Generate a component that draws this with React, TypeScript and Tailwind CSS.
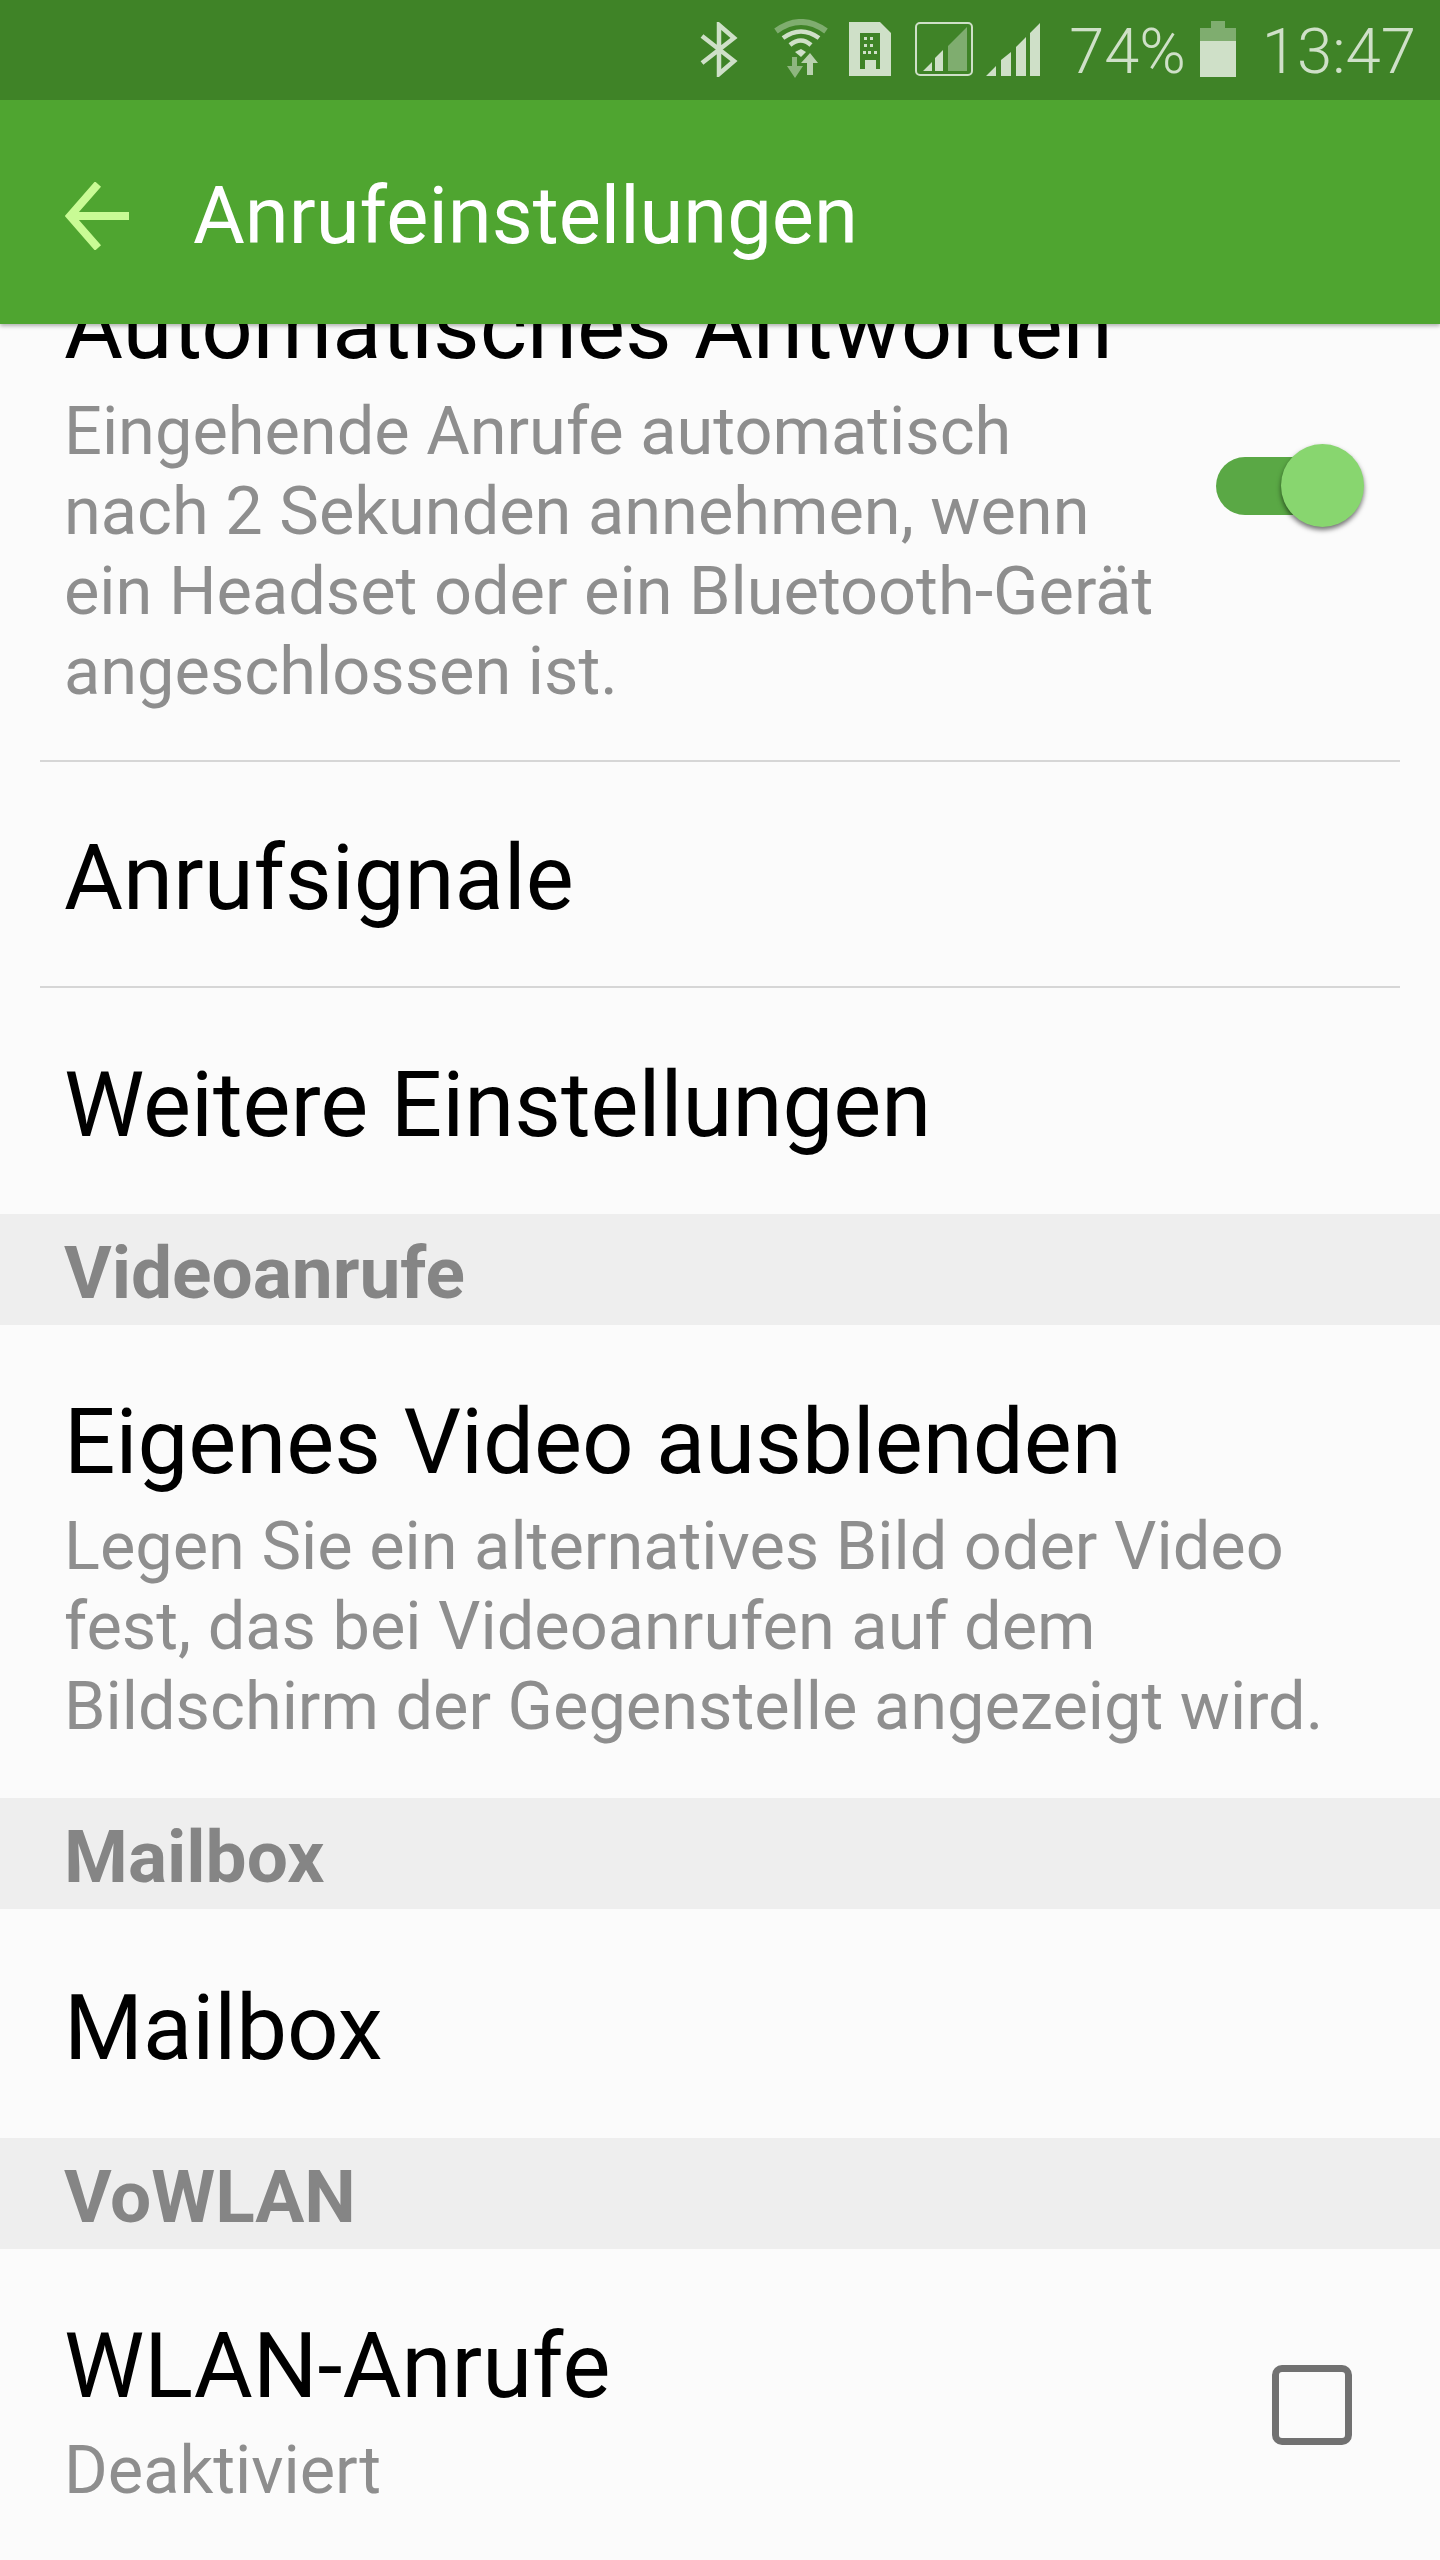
import React from "react";

const font = { fontFamily: "Roboto, sans-serif" };
const c = "#cfe0c8";
const bg = "#3f8327";

function StatusIcons() {
  return (
    <>
      <svg width="38" height="55" viewBox="0 0 38 55" className="mr-[35px]" fill="none" stroke={c} strokeWidth="4.5">
        <path d="M2 14 L34 39 L19 52 V3 L34 16 L2 41" />
      </svg>
      <svg width="56" height="60" viewBox="0 0 56 60" className="mr-[20px]" fill="none">
        <path d="M3 12 Q28 -6 53 12" stroke={c} strokeOpacity="0.45" strokeWidth="6" />
        <path d="M10 19 Q28 6 46 19" stroke={c} strokeWidth="4.5" />
        <path d="M17 26 Q28 17 38 26" stroke={c} strokeWidth="4.5" />
        <path d="M22 33 L28 30 L33 33 L28 38 Z" fill={c} />
        <path fill={c} fillOpacity="0.55" d="M19 38 H24 V47 H30 L22 59 L14 47 H19 Z" />
        <path fill={c} fillOpacity="0.85" d="M37 34 L45 44 H40 V56 H34 V44 H28 Z" />
      </svg>
      <svg width="42" height="54" viewBox="0 0 42 54" className="mr-[24px]">
        <path fill={c} d="M0 0 H31 L42 11 V54 H0 Z" />
        <path fill={bg} d="M11 11 H31 V47 H27 V38 H16 V47 H11 Z" />
        <path fill={c} d="M15 15 h3 v3 h-3z M21 15 h3 v3 h-3z M15 22 h3 v3 h-3z M21 22 h3 v3 h-3z M14 29 h3 v3 h-3z M19 29 h3 v3 h-3z M25 29 h3 v3 h-3z" />
      </svg>
      <svg width="58" height="54" viewBox="0 0 58 54" className="mr-[13px]" fill="none">
        <rect x="1" y="1" width="56" height="52" rx="4" stroke={c} strokeWidth="2" />
        <path d="M8 49 L17 40 V49 Z M20 49 V36 L28 28 V49 Z" fill={c} />
        <path d="M33 49 V24 L52 5 V49 Z" fill={c} fillOpacity="0.45" />
      </svg>
      <svg width="54" height="53" viewBox="0 0 54 53" className="mr-[29px]">
        <path fill={c} d="M0 53 L10 43 V53 Z M15 53 V37 L25 29 V53 Z M30 53 V24 L40 14 V53 Z M44 53 V10 L54 0 V53 Z" />
      </svg>
    </>
  );
}

function Battery() {
  return (
    <svg width="36" height="56" viewBox="0 0 36 56" className="ml-[14px] mr-[26px]">
      <rect x="11" y="0" width="14" height="7" fill={c} fillOpacity="0.45" />
      <rect x="0" y="7" width="36" height="13" fill={c} fillOpacity="0.45" />
      <rect x="0" y="20" width="36" height="36" fill={c} />
    </svg>
  );
}

function Section({ title }: { title: string }) {
  return (
    <div className="h-[111px] bg-[#eeeeee] pl-[64px] pt-[7px] flex items-center">
      <span className="text-[73px] font-bold text-[#858585] leading-none">{title}</span>
    </div>
  );
}

function Title({ children }: { children: React.ReactNode }) {
  return <div className="text-[90.5px] leading-[100px] text-black font-normal whitespace-nowrap">{children}</div>;
}

function Desc({ lines }: { lines: string[] }) {
  return (
    <div className="mt-[14px] text-[66.7px] leading-[80px] text-[#8e8e8e] font-normal">
      {lines.map((l) => (
        <div key={l} className="whitespace-nowrap">{l}</div>
      ))}
    </div>
  );
}

export default function App() {
  return (
    <div className="w-[1440px] h-[2560px] overflow-hidden bg-[#fbfbfb] flex flex-col" style={font}>
      <div className="relative z-10 shadow-[0_2px_4px_rgba(0,0,0,0.3)]">
        <div className="h-[100px] bg-[#3f8327] flex items-center justify-end pb-[2px]">
          <StatusIcons />
          <span className="mt-[6px] text-[63px] font-light text-[#cfe0c8]">74%</span>
          <Battery />
          <span className="mt-[6px] text-[63.5px] font-light text-[#cfe0c8] mr-[24px]">13:47</span>
        </div>
        <div className="h-[224px] bg-[#4fa530] flex items-center pl-[65px] pt-[8px]">
          <svg width="64" height="68" viewBox="0 0 64 68" fill="none" stroke="#c9fb95" strokeWidth="8" className="mr-[64px]">
            <path d="M33 2 L5 34 L33 66 M5 34 H64" strokeLinejoin="miter" />
          </svg>
          <span className="text-[79.5px] text-white font-normal whitespace-nowrap">Anrufeinstellungen</span>
        </div>
      </div>

      <div className="flex-1 overflow-hidden">
        <div className="relative px-[64px] h-[436px] flex items-end pb-[49px]">
          <div className="flex flex-col">
            <Title>Automatisches Antworten</Title>
            <Desc lines={["Eingehende Anrufe automatisch", "nach 2 Sekunden annehmen, wenn", "ein Headset oder ein Bluetooth-Gerät", "angeschlossen ist."]} />
          </div>
          <div className="absolute left-[1216px] top-[133px] w-[148px] h-[58px]">
            <div className="absolute left-0 top-0 w-[110px] h-[58px] rounded-full bg-[#5aa845]" />
            <div className="absolute left-[65px] top-[-13px] w-[83px] h-[83px] rounded-full bg-[#88d66f] shadow-[0_3px_5px_rgba(0,0,0,0.55)]" />
          </div>
        </div>
        <div className="mx-[40px] h-[2px] bg-[#d6d6d6]" />
        <div className="h-[224px] pl-[64px] pt-[8px] flex items-center"><Title>Anrufsignale</Title></div>
        <div className="mx-[40px] h-[2px] bg-[#d6d6d6]" />
        <div className="h-[226px] pl-[64px] pt-[8px] flex items-center"><Title>Weitere Einstellungen</Title></div>
        <Section title="Videoanrufe" />
        <div className="h-[473px] pl-[64px] pt-[67px]">
          <Title>Eigenes Video ausblenden</Title>
          <Desc lines={["Legen Sie ein alternatives Bild oder Video", "fest, das bei Videoanrufen auf dem", "Bildschirm der Gegenstelle angezeigt wird."]} />
        </div>
        <Section title="Mailbox" />
        <div className="h-[229px] pl-[64px] pt-[8px] flex items-center"><Title>Mailbox</Title></div>
        <Section title="VoWLAN" />
        <div className="h-[311px] pl-[64px] pr-[88px] pt-[67px] flex justify-between">
          <div>
            <Title>WLAN-Anrufe</Title>
            <Desc lines={["Deaktiviert"]} />
          </div>
          <div className="mt-[49px] w-[80px] h-[80px] rounded-[10px] border-[7px] border-[#717171]" />
        </div>
      </div>
    </div>
  );
}
